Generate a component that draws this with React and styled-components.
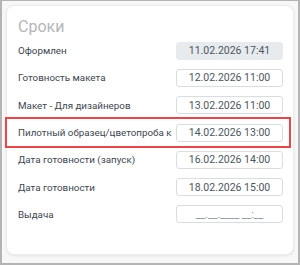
import React from "react";
import styled, { createGlobalStyle } from "styled-components";

const GlobalStyle = createGlobalStyle`
  body {
    margin: 0;
    font-family: Roboto, "Liberation Sans", sans-serif;
  }
`;

const rows = [
  { label: "Оформлен", value: "11.02.2026 17:41", readOnly: true },
  { label: "Готовность макета", value: "12.02.2026 11:00" },
  { label: "Макет - Для дизайнеров", value: "13.02.2026 11:00" },
  { label: "Пилотный образец/цветопроба к", value: "14.02.2026 13:00", marked: true },
  { label: "Дата готовности (запуск)", value: "16.02.2026 14:00" },
  { label: "Дата готовности", value: "18.02.2026 15:00" },
  { label: "Выдача", value: "__.__.____ __:__", empty: true },
];

function App() {
  return (
    <Frame>
      <GlobalStyle />
      <Card>
        <Title>Сроки</Title>
        <List>
          {rows.map((row) => (
            <Row key={row.label} marked={row.marked}>
              <Label>{row.label}</Label>
              <DateBox readOnly={row.readOnly} empty={row.empty}>
                {row.value}
              </DateBox>
            </Row>
          ))}
        </List>
      </Card>
    </Frame>
  );
}

export default App;

const Frame = styled.div`
  width: 300px;
  height: 265px;
  box-sizing: border-box;
  border: 2px solid #b4b4b4;
  border-top-width: 1px;
  background: #f7f7f7;
  padding: 4px 4px 0 4px;
`;

const Card = styled.div`
  width: 288px;
  height: 250px;
  box-sizing: border-box;
  background: #fff;
  border-radius: 8px;
  border: 1px solid #ececec;
  box-shadow: 0 1px 3px rgba(0, 0, 0, 0.08);
  padding: 11px 10px 0 11px;
`;

const Title = styled.div`
  font-size: 16px;
  line-height: 19px;
  color: #b3b7bb;
  margin-bottom: 1px;
`;

const List = styled.div`
  display: flex;
  flex-direction: column;
`;

const Row = styled.div.withConfig({ shouldForwardProp: (p) => p !== "marked" })`
  position: relative;
  display: flex;
  align-items: center;
  height: 27.3px;
  gap: 4px;

  &::after {
    content: "";
    display: ${(p) => (p.marked ? "block" : "none")};
    position: absolute;
    left: -13px;
    right: -8px;
    top: -2px;
    bottom: -2px;
    border: 2px solid #ec4448;
    pointer-events: none;
  }
`;

const Label = styled.div`
  flex: 1;
  min-width: 0;
  overflow: hidden;
  white-space: nowrap;
  font-size: 9.8px;
  color: #3d4650;
`;

const DateBox = styled.div.withConfig({
  shouldForwardProp: (p) => p !== "readOnly" && p !== "empty",
})`
  flex: none;
  width: 107px;
  height: 18px;
  box-sizing: border-box;
  display: flex;
  align-items: center;
  justify-content: center;
  border-radius: 3px;
  border: 1px solid ${(p) => (p.readOnly ? "#e8ebee" : "#d9dde1")};
  background: ${(p) => (p.readOnly ? "#e8ebee" : "#fff")};
  font-size: 10.5px;
  color: ${(p) => (p.empty ? "#8a949e" : "#4b5660")};
`;
